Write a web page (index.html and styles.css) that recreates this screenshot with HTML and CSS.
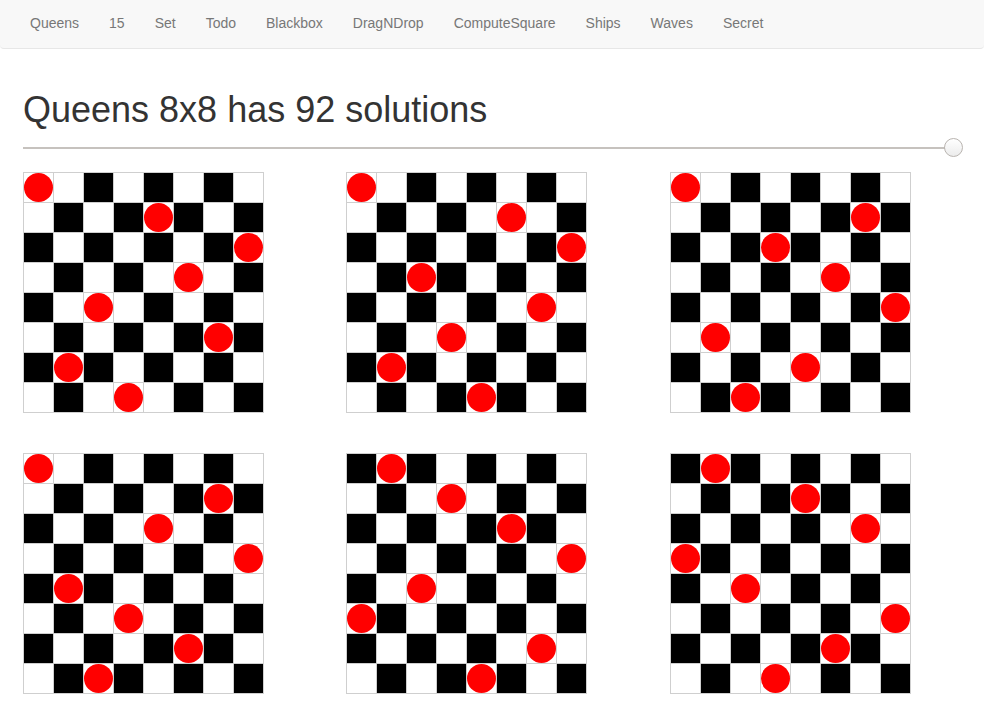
FILE: index.html
```html
<!DOCTYPE html>
<html lang="en">
<head>
<meta charset="utf-8">
<title>Queens</title>
<link rel="stylesheet" href="styles.css">
</head>
<body>
<nav class="navbar">
  <a class="nav-link" href="#">Queens</a>
  <a class="nav-link" href="#">15</a>
  <a class="nav-link" href="#">Set</a>
  <a class="nav-link" href="#">Todo</a>
  <a class="nav-link" href="#">Blackbox</a>
  <a class="nav-link" href="#">DragNDrop</a>
  <a class="nav-link" href="#">ComputeSquare</a>
  <a class="nav-link" href="#">Ships</a>
  <a class="nav-link" href="#">Waves</a>
  <a class="nav-link" href="#">Secret</a>
</nav>
<main class="content">
  <h1 class="title">Queens 8x8 has 92 solutions</h1>
  <div class="slider">
    <div class="slider-track"></div>
    <div class="slider-knob"></div>
  </div>
  <div class="boards" id="boards"></div>
</main>
<script src="script.js"></script>
</body>
</html>
```

FILE: styles.css
```css
html, body {
  margin: 0;
  padding: 0;
  background: #fff;
}
body {
  font-family: "Liberation Sans", Arial, sans-serif;
  font-size: 14px;
  color: #333;
}
.navbar {
  display: flex;
  height: 48px;
  padding-left: 15px;
  background: #f8f8f8;
  border-bottom: 1px solid #e7e7e7;
  border-radius: 0 0 4px 4px;
}
.nav-link {
  display: block;
  padding: 13px 15px 15px;
  line-height: 20px;
  color: #777;
  text-decoration: none;
  font-size: 14px;
}
.content {
  padding: 0 23px;
}
.title {
  margin: 41px 0 0;
  font-size: 36px;
  line-height: 40px;
  font-weight: 500;
  color: #333;
}
.slider {
  position: relative;
  height: 20px;
  margin: 8px 7px 0 0;
  display: flex;
  align-items: center;
}
.slider-track {
  flex: 1;
  height: 2px;
  background: #c6c2be;
}
.slider-knob {
  position: absolute;
  right: -9px;
  top: 0;
  width: 17px;
  height: 17px;
  border: 1px solid #b9b4b0;
  border-radius: 50%;
  background: linear-gradient(#ffffff, #ececec);
}
.boards {
  margin-top: 14px;
  display: grid;
  grid-template-columns: 323px 324px 1fr;
  row-gap: 40px;
}
.board {
  border-collapse: collapse;
}
.cell {
  width: 29px;
  height: 29px;
  padding: 0;
  border: 1px solid #cfcfcf;
  background: #fff;
}
.cell-dark {
  background: #000;
}
.queen {
  width: 29px;
  height: 29px;
  border-radius: 50%;
  background: #ff0000;
}
```

FILE: script.js
```js
(function () {
  var N = 8;
  var solutions = [];
  var cols = [];
  function ok(row, col) {
    for (var r = 0; r < row; r++) {
      var c = cols[r];
      if (c === col || Math.abs(c - col) === row - r) return false;
    }
    return true;
  }
  function solve(row) {
    if (row === N) { solutions.push(cols.slice()); return; }
    for (var c = 0; c < N; c++) {
      if (ok(row, c)) { cols[row] = c; solve(row + 1); }
    }
  }
  solve(0);
  var container = document.getElementById('boards');
  solutions.forEach(function (sol) {
    var wrap = document.createElement('div');
    wrap.className = 'board-wrap';
    var table = document.createElement('table');
    table.className = 'board';
    for (var r = 0; r < N; r++) {
      var tr = document.createElement('tr');
      for (var c = 0; c < N; c++) {
        var td = document.createElement('td');
        td.className = 'cell';
        if (sol[r] === c) {
          var q = document.createElement('div');
          q.className = 'queen';
          td.appendChild(q);
        } else if ((r + c) % 2 === 0) {
          td.className = 'cell cell-dark';
        }
        tr.appendChild(td);
      }
      table.appendChild(tr);
    }
    wrap.appendChild(table);
    container.appendChild(wrap);
  });
})();
```
